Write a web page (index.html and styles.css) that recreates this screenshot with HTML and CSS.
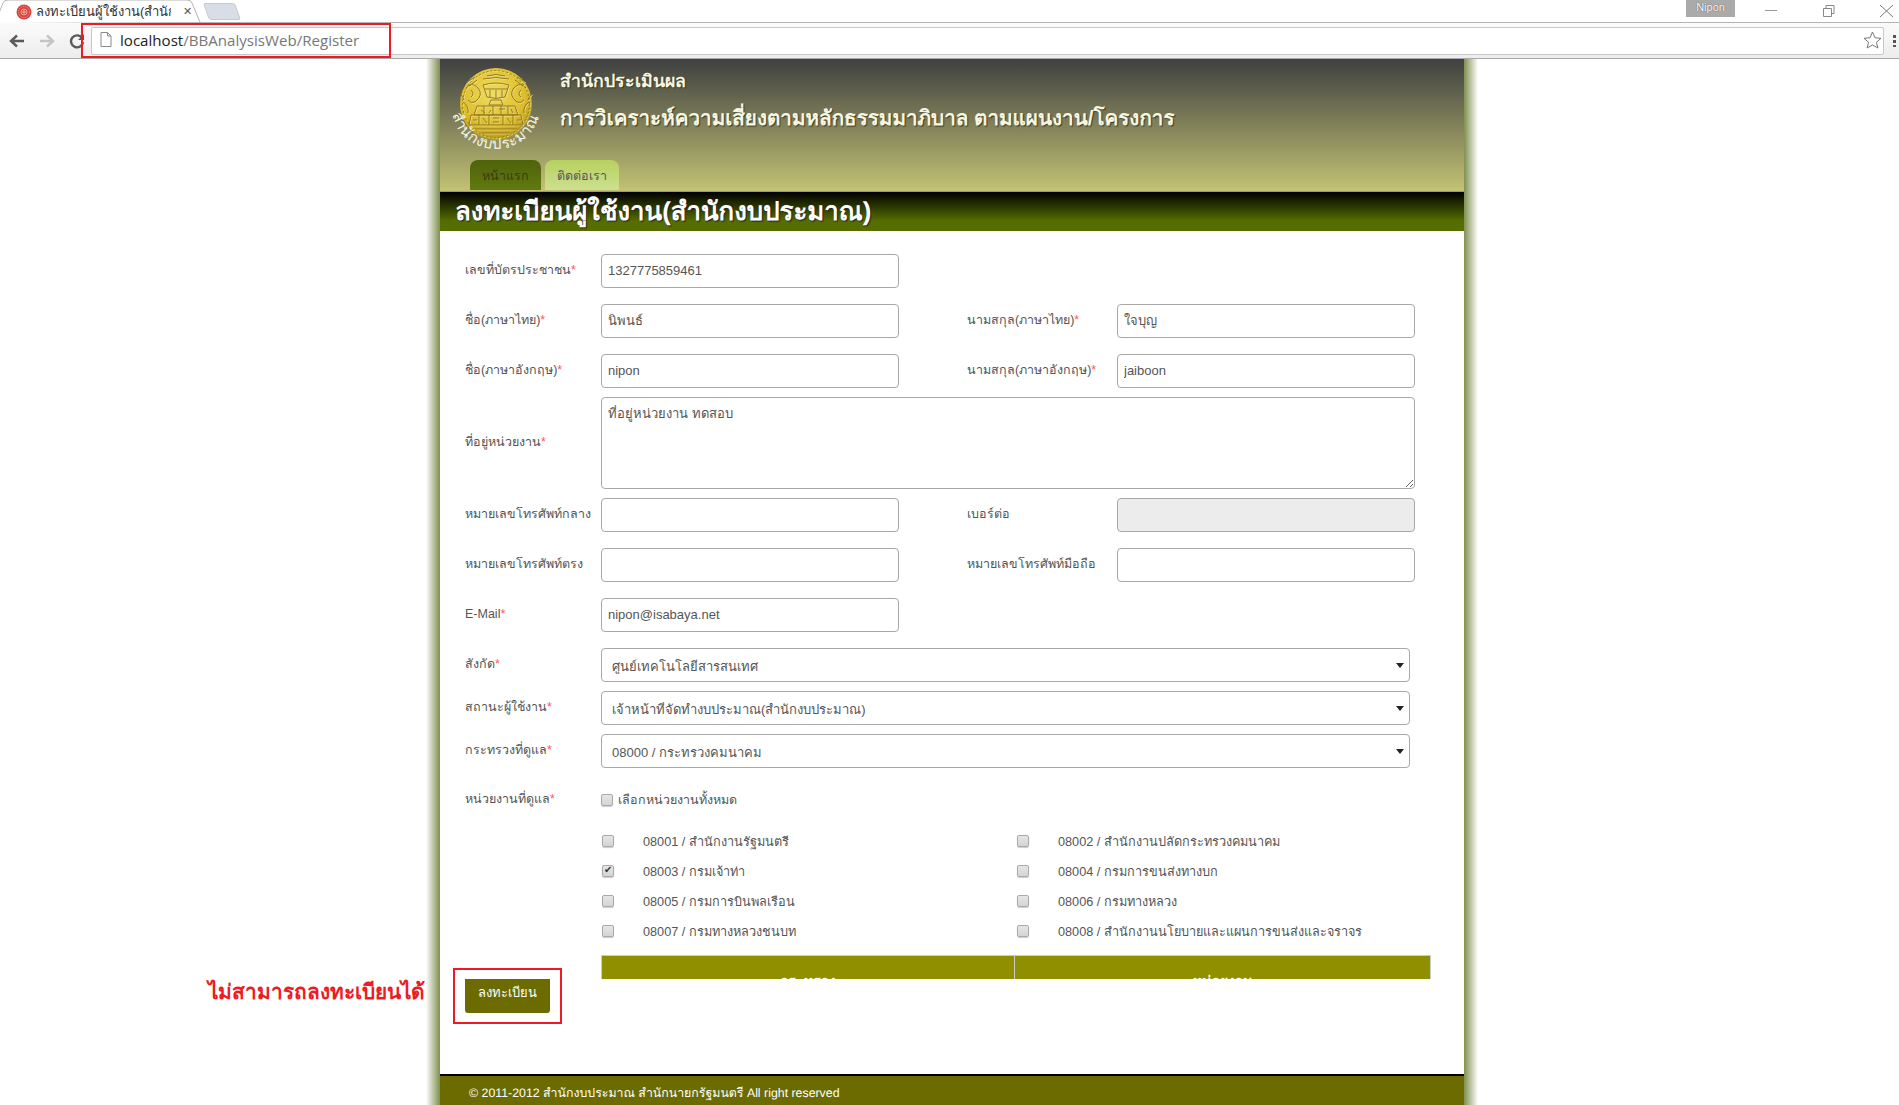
FILE: index.html
```html
<!DOCTYPE html>
<html lang="th">

<head>
  <meta charset="UTF-8">
  <meta name="viewport" content="width=device-width, initial-scale=1.0">
  <title>ลงทะเบียนผู้ใช้งาน(สำนักงบประมาณ)</title>
  <link rel="stylesheet" href="styles.css">
</head>

<body>
  <div class="browser">
    <div class="tabstrip">
      <div class="tab">
        <svg class="tab-shape" width="208" height="23" viewBox="0 0 208 23">
          <path d="M0 23 L8 3 Q9 0 13 0 H192 Q196 0 197 3 L205 22" fill="#fff" stroke="#b4b4b4"/>
        </svg>
        <svg class="favicon" width="16" height="16" viewBox="0 0 16 16">
          <circle cx="8" cy="8" r="7.5" fill="#d8413c"/>
          <circle cx="8" cy="8" r="5.5" fill="none" stroke="#f4b0a0" stroke-width="1" stroke-dasharray="1 1"/>
          <circle cx="8" cy="8" r="3" fill="none" stroke="#f4b0a0" stroke-width="1"/>
          <path d="M6 8 H10 M8 6 V10" stroke="#f4b0a0" stroke-width="1"/>
        </svg>
        <span class="tab-title">ลงทะเบียนผู้ใช้งาน(สำนัก</span>
        <span class="tab-close">✕</span>
      </div>
      <div class="newtab"></div>
      <div class="win-controls">
        <span class="user-badge">Nipon</span>
        <svg width="80" height="17" viewBox="0 0 80 17" class="win-icons">
          <path d="M30 10.5 H42" stroke="#999" fill="none"/>
          <path d="M88.5 8.5 h8 v8 h-8 z M91 8 v-2.500 h8 v8 h-2" stroke="#888" fill="none"/>
        </svg>
        <svg width="16" height="14" viewBox="0 0 16 14" class="close-icon">
          <path d="M1 1 L14 13 M14 1 L1 13" stroke="#777" fill="none"/>
        </svg>
      </div>
    </div>
    <div class="toolbar">
      <svg class="nav-icon" width="16" height="14" viewBox="0 0 16 14">
        <path d="M15 7 H3 M8 1.500 L2 7 L8 12.500" stroke="#5a5a5a" stroke-width="2.400" fill="none"/>
      </svg>
      <svg class="nav-icon" width="16" height="14" viewBox="0 0 16 14">
        <path d="M1 7 H13 M8 1.500 L14 7 L8 12.500" stroke="#c4c4c4" stroke-width="2.400" fill="none"/>
      </svg>
      <svg class="nav-icon" width="16" height="16" viewBox="0 0 16 16">
        <path d="M13 5 A6 6 0 1 0 14 9" stroke="#5a5a5a" stroke-width="2.400" fill="none"/>
        <path d="M15 1 V7 H9 Z" fill="#5a5a5a"/>
      </svg>
      <div class="addressbar">
        <svg class="page-icon" width="12" height="15" viewBox="0 0 12 15">
          <path d="M1 .5 H7.500 L11 4 V14.500 H1 Z M7.500 .5 V4 H11" fill="#fff" stroke="#8a8a8a"/>
        </svg>
        <span class="url-host">localhost</span><span class="url-path">/BBAnalysisWeb/Register</span>
        <svg class="star" width="19" height="18" viewBox="0 0 19 18">
          <path d="M9.500 1 L12 6.800 L18 7.300 L13.400 11.300 L14.900 17 L9.500 14 L4.100 17 L5.600 11.300 L1 7.300 L7 6.800 Z" fill="none" stroke="#777"/>
        </svg>
      </div>
      <span class="menu-dots"></span>
    </div>
    <div class="url-callout"></div>
  </div>

  <div class="stage">
    <p class="note">ไม่สามารถลงทะเบียนได้</p>

    <div class="shell">
      <div class="wrapper">
        <header class="site-header">
          <div class="brand">
            <svg class="logo" width="96" height="92" viewBox="0 0 96 92">
              <defs>
                <radialGradient id="gold" cx="45%" cy="35%" r="70%">
                  <stop offset="0" stop-color="#f2de5c"/>
                  <stop offset=".65" stop-color="#dcbc2c"/>
                  <stop offset="1" stop-color="#b09214"/>
                </radialGradient>
                <path id="arc" d="M5.300 46.900 A45 45 0 0 0 92.700 46.900"/>
                <g id="seal" fill="none">
                  <circle cx="49" cy="36" r="33.500" stroke-dasharray="2 2"/>
                  <path d="M36 17 Q49 13 62 17 L58 29 Q49 32 40 29 Z"/>
                  <path d="M38 21 H60 M43 22 V29 M49 22 V30 M55 22 V29 M44 32 H54 L56 37 H42 Z"/>
                  <path d="M30 38 H68 L71 47 H27 Z M24 47 H74 L76 57 H22 Z"/>
                  <path d="M37 38 V47 M46 38 V47 M54 38 V47 M61 38 V47 M32 47 V57 M42 47 V57 M56 47 V57 M66 47 V57"/>
                  <path d="M34 42 L38 45 M44 42 L42 45 M52 41 H58 M64 41 L66 45 M26 52 H30 M36 50 L40 55 M46 50 H52 M46 54 H52 M60 50 L64 55 M70 52 H74"/>
                  <path d="M19 20 Q25 13 31 20 T28 34 Q24 36 21 32 M79 20 Q73 13 67 20 T70 34 Q74 36 77 32"/>
                  <path d="M24 22 Q28 26 24 29 M74 22 Q70 26 74 29"/>
                  <path d="M16 34 Q22 38 21 45 M82 34 Q76 38 77 45 M13 26 Q16 28 17 32 M85 26 Q82 28 81 32"/>
                  <path d="M20 14 L28 9 M78 14 L70 9 M22 18 L30 12 M76 18 L68 12"/>
                  <path d="M28 61 H70 M35 65 H63 M40 8 Q49 5 58 8 M36 11 Q49 8 62 11"/>
                </g>
              </defs>
              <circle cx="49" cy="36" r="36" fill="url(#gold)"/>
              <use href="#seal" class="seal-light" x=".8" y=".8"/>
              <use href="#seal" class="seal-dark"/>
              <text class="logo-text"><textPath href="#arc" textLength="117">สำนักงบประมาณ</textPath></text>
            </svg>
            <div class="brand-text">
              <div class="brand-org">สำนักประเมินผล</div>
              <div class="brand-name">การวิเคราะห์ความเสี่ยงตามหลักธรรมมาภิบาล ตามแผนงาน/โครงการ</div>
            </div>
          </div>
          <nav class="tabs">
            <a class="nav-tab nav-tab-active">หน้าแรก</a>
            <a class="nav-tab">ติดต่อเรา</a>
          </nav>
        </header>

        <h1 class="band">ลงทะเบียนผู้ใช้งาน(สำนักงบประมาณ)</h1>

        <form class="form">
          <div class="row">
            <label class="lbl">เลขที่บัตรประชาชน<span class="req">*</span></label>
            <input class="field" type="text" value="1327775859461">
          </div>
          <div class="row">
            <label class="lbl">ชื่อ(ภาษาไทย)<span class="req">*</span></label>
            <input class="field" type="text" value="นิพนธ์">
            <label class="lbl lbl-right">นามสกุล(ภาษาไทย)<span class="req">*</span></label>
            <input class="field" type="text" value="ใจบุญ">
          </div>
          <div class="row row-tight">
            <label class="lbl">ชื่อ(ภาษาอังกฤษ)<span class="req">*</span></label>
            <input class="field" type="text" value="nipon">
            <label class="lbl lbl-right">นามสกุล(ภาษาอังกฤษ)<span class="req">*</span></label>
            <input class="field" type="text" value="jaiboon">
          </div>
          <div class="row row-area">
            <label class="lbl">ที่อยู่หน่วยงาน<span class="req">*</span></label>
            <textarea class="field field-area">ที่อยู่หน่วยงาน ทดสอบ</textarea>
          </div>
          <div class="row">
            <label class="lbl">หมายเลขโทรศัพท์กลาง</label>
            <input class="field" type="text">
            <label class="lbl lbl-right">เบอร์ต่อ</label>
            <input class="field" type="text" disabled>
          </div>
          <div class="row">
            <label class="lbl">หมายเลขโทรศัพท์ตรง</label>
            <input class="field" type="text">
            <label class="lbl lbl-right">หมายเลขโทรศัพท์มือถือ</label>
            <input class="field" type="text">
          </div>
          <div class="row">
            <label class="lbl">E-Mail<span class="req">*</span></label>
            <input class="field" type="text" value="nipon@isabaya.net">
          </div>
          <div class="row row-tight">
            <label class="lbl">สังกัด<span class="req">*</span></label>
            <div class="select-wrap">
              <select class="field-select">
                <option>ศูนย์เทคโนโลยีสารสนเทศ</option>
              </select>
            </div>
          </div>
          <div class="row row-tight">
            <label class="lbl">สถานะผู้ใช้งาน<span class="req">*</span></label>
            <div class="select-wrap">
              <select class="field-select">
                <option>เจ้าหน้าที่จัดทำงบประมาณ(สำนักงบประมาณ)</option>
              </select>
            </div>
          </div>
          <div class="row row-wide">
            <label class="lbl">กระทรวงที่ดูแล<span class="req">*</span></label>
            <div class="select-wrap">
              <select class="field-select">
                <option>08000 / กระทรวงคมนาคม</option>
              </select>
            </div>
          </div>
          <div class="row-check">
            <label class="lbl">หน่วยงานที่ดูแล<span class="req">*</span></label>
            <input class="check" type="checkbox">
            <span class="check-all">เลือกหน่วยงานทั้งหมด</span>
          </div>
          <div class="units">
            <div class="unit"><input class="check" type="checkbox"><span>08001 / สำนักงานรัฐมนตรี</span></div>
            <div class="unit"><input class="check" type="checkbox"><span>08002 / สำนักงานปลัดกระทรวงคมนาคม</span></div>
            <div class="unit"><input class="check" type="checkbox" checked><span>08003 / กรมเจ้าท่า</span></div>
            <div class="unit"><input class="check" type="checkbox"><span>08004 / กรมการขนส่งทางบก</span></div>
            <div class="unit"><input class="check" type="checkbox"><span>08005 / กรมการบินพลเรือน</span></div>
            <div class="unit"><input class="check" type="checkbox"><span>08006 / กรมทางหลวง</span></div>
            <div class="unit"><input class="check" type="checkbox"><span>08007 / กรมทางหลวงชนบท</span></div>
            <div class="unit"><input class="check" type="checkbox"><span>08008 / สำนักงานนโยบายและแผนการขนส่งและจราจร</span></div>
          </div>
          <div class="tail">
            <div class="btn-callout">
              <button class="btn" type="button">ลงทะเบียน</button>
            </div>
            <div class="table-clip">
              <table class="unit-table">
                <tr>
                  <th class="col-ministry">กระทรวง</th>
                  <th>หน่วยงาน</th>
                </tr>
              </table>
            </div>
          </div>
        </form>

        <footer class="footer">© 2011-2012 สำนักงบประมาณ สำนักนายกรัฐมนตรี All right reserved</footer>
      </div>
    </div>
  </div>
</body>

</html>
```

FILE: styles.css
```css
* {
  box-sizing: border-box;
}

html,
body {
  margin: 0;
  height: 100%;
  overflow: hidden;
}

body {
  display: flex;
  flex-direction: column;
  font-family: "Liberation Sans", "Noto Sans", sans-serif;
  background: #fff;
}

/* browser bar */
.browser {
  position: relative;
  height: 59px;
  flex: none;
}

.tabstrip {
  display: flex;
  height: 23px;
  background: #fff;
  border-bottom: 1px solid #b4b4b4;
}

.tab {
  position: relative;
  display: flex;
  align-items: center;
  width: 202px;
  height: 23px;
  padding-left: 16px;
  font-size: 13px;
  color: #333;
}

.tab-shape {
  position: absolute;
  left: -5px;
  top: 0;
}

.favicon {
  position: relative;
  flex: none;
}

.tab-title {
  position: relative;
  width: 135px;
  margin-left: 4px;
  overflow: hidden;
  white-space: nowrap;
}

.tab-close {
  position: relative;
  margin-left: 12px;
  font-size: 11px;
  color: #555;
}

.newtab {
  width: 32px;
  height: 17px;
  margin: 3px 0 0 4px;
  background: #d8dee6;
  border: 1px solid #c4cad2;
  border-radius: 3px;
  transform: skewX(20deg);
}

.win-controls {
  display: flex;
  flex: 1;
  justify-content: flex-end;
  position: relative;
}

.user-badge {
  position: absolute;
  right: 164px;
  top: 0;
  width: 49px;
  height: 17px;
  background: #aaa;
  color: #fff;
  font-size: 11px;
  line-height: 15px;
  text-align: center;
  text-shadow: 0 0 1px #333;
}

.win-icons {
  position: absolute;
  right: 84px;
  top: 0;
  overflow: visible;
}

.close-icon {
  position: absolute;
  right: 4px;
  top: 4px;
}

.toolbar {
  display: flex;
  align-items: center;
  height: 36px;
  padding-left: 9px;
  gap: 14px;
  background: linear-gradient(#fbfbfb, #ededed);
  border-bottom: 1px solid #a9a9a9;
}

.addressbar {
  display: flex;
  align-items: center;
  width: 1793px;
  height: 28px;
  margin-left: -8px;
  padding: 0 0 2px 8px;
  background: #fff;
  border: 1px solid #c8c8c8;
  border-radius: 2px;
  font-family: "Open Sans", sans-serif;
  font-size: 15.100px;
}

.page-icon {
  margin-right: 8px;
}

.url-host {
  color: #222;
}

.url-path {
  color: #777;
}

.star {
  margin-left: auto;
  margin-right: 1px;
}

.menu-dots {
  width: 3px;
  height: 13px;
  margin-left: -5px;
  background: radial-gradient(circle, #555 1.500px, transparent 1.600px) 0 0 / 3px 5px;
}

.url-callout {
  position: absolute;
  left: 81px;
  top: 23px;
  width: 310px;
  height: 35px;
  border: 2px solid #ed1c24;
}

/* page */
.stage {
  position: relative;
  flex: 1;
  padding-left: 426px;
}

.note {
  position: absolute;
  left: 208px;
  top: 916px;
  margin: 0;
  font-size: 20.800px;
  font-weight: bold;
  color: #ed1c24;
  white-space: nowrap;
}

.shell {
  width: 1052px;
  padding: 0 14px;
  background: linear-gradient(to right, #fff, #7f8f4f 14px, #7f8f4f 1038px, #fff);
}

.wrapper {
  display: flex;
  flex-direction: column;
  width: 1024px;
  height: 1046px;
  background: #fff;
}

.site-header {
  height: 132px;
  padding-left: 7px;
  background: linear-gradient(#3f4040, #c3c274);
}

.brand {
  display: flex;
  height: 101px;
}

.logo {
  flex: none;
  margin-top: 9px;
  overflow: visible;
}

.seal-light {
  stroke: #f4e9a8;
  stroke-width: .8;
}

.seal-dark {
  stroke: #8a7014;
  stroke-width: .9;
}

.logo-text {
  font-size: 15px;
  fill: #f5f5e4;
}

.brand-text {
  margin-left: 17px;
  color: #f6f6e2;
  text-shadow: 1px 1px 1px #3a3a20;
}

.brand-org {
  margin-top: 8px;
  font-size: 17.700px;
  font-weight: bold;
}

.brand-name {
  margin-top: 7px;
  font-size: 20.600px;
  font-weight: bold;
  text-rendering: geometricPrecision;
}

.tabs {
  display: flex;
  gap: 4px;
  padding-left: 23px;
}

.nav-tab {
  height: 30px;
  padding: 0 12px;
  border-radius: 8px 8px 0 0;
  background: linear-gradient(#b7d05f, #cde08f);
  color: #555;
  font-size: 12.500px;
  line-height: 32px;
}

.nav-tab-active {
  background: linear-gradient(#4f620a, #607a10);
  color: #3a3a12;
}

.band {
  flex: none;
  height: 40px;
  margin: 0;
  padding-left: 15px;
  border-top: 1px solid #a9a327;
  background: linear-gradient(#000, #566d00 75%);
  color: #fff;
  font-size: 25.800px;
  font-weight: bold;
  line-height: 40px;
  text-rendering: geometricPrecision;
  text-shadow: 1px 1px 1px #222;
}

.form {
  flex: 1;
  padding: 23px 0 0 25px;
  color: #555;
  font-size: 12.500px;
}

.row {
  display: flex;
  align-items: center;
  height: 34px;
  margin-bottom: 16px;
}

.row-tight {
  margin-bottom: 9px;
}

.row-area {
  height: 92px;
  margin-bottom: 9px;
}

.row-wide {
  margin-bottom: 24px;
}

.lbl {
  flex: none;
  width: 136px;
  padding-bottom: 2px;
  white-space: nowrap;
}

.lbl-right {
  width: 150px;
  margin-left: 68px;
}

.req {
  color: #f55;
}

.field {
  width: 298px;
  height: 34px;
  padding: 0 6px 2px;
  background: #fff;
  border: 1px solid #a8a8a8;
  border-radius: 4px;
  color: #555;
  font: 13px "Liberation Sans", "Noto Sans", sans-serif;
}

.field:disabled {
  background: #ececec;
}

.field-area {
  flex: none;
  width: 814px;
  height: 92px;
  padding: 5px 6px;
}

.select-wrap {
  position: relative;
  width: 809px;
}

.select-wrap::after {
  content: "";
  position: absolute;
  right: 6px;
  top: 15px;
  border: 4px solid transparent;
  border-top: 5px solid #222;
  border-bottom: 0;
}

.field-select {
  display: block;
  width: 100%;
  height: 34px;
  padding: 3px 10px 0;
  appearance: none;
  background: #fff;
  border: 1px solid #a8a8a8;
  border-radius: 4px;
  color: #555;
  font: 13px "Liberation Sans", "Noto Sans", sans-serif;
}

.row-check {
  display: flex;
  align-items: center;
  height: 16px;
}

.check {
  position: relative;
  flex: none;
  width: 12px;
  height: 12px;
  margin: 0;
  appearance: none;
  background: linear-gradient(#e6e6e6, #d4d4d4);
  border: 1px solid #aaa;
  border-radius: 2px;
  box-shadow: 0 1px 1px #ccc;
}

.check:checked::after {
  content: "✔";
  position: absolute;
  left: 1px;
  top: -2px;
  color: #333;
  font-size: 10px;
}

.check-all {
  margin-left: 5px;
}

.units {
  display: grid;
  grid-template-columns: 415px 415px;
  grid-auto-rows: 30px;
  margin: 18px 0 0 137px;
  font-size: 12.700px;
}

.unit {
  display: flex;
  align-items: center;
  gap: 29px;
}

.tail {
  display: flex;
  align-items: flex-start;
  margin-top: 9px;
}

.btn-callout {
  flex: none;
  width: 109px;
  height: 56px;
  margin: 13px 0 0 -12px;
  padding: 9px 10px;
  border: 2px solid #ed1c24;
}

.btn {
  display: block;
  width: 85px;
  height: 34px;
  padding: 0 0 8px;
  background: #6b6b00;
  border: 0;
  border-radius: 0 0 3px 3px;
  color: #fff;
  font: 13px "Liberation Sans", "Noto Sans", sans-serif;
}

.table-clip {
  width: 830px;
  height: 24px;
  margin-left: 39px;
  overflow: hidden;
}

.unit-table {
  width: 100%;
  height: 45px;
  border-collapse: collapse;
}

.unit-table th {
  background: #8f8f00;
  border: 1px solid #ccc;
  color: #fff;
  font-size: 14px;
  padding-top: 7px;
}

.col-ministry {
  width: 413px;
}

.footer {
  flex: none;
  height: 31px;
  padding-left: 29px;
  background: #6b6b00;
  border-top: 2px solid #000;
  color: #fff;
  font-size: 12.350px;
  line-height: 34px;
  text-rendering: geometricPrecision;
}
```
